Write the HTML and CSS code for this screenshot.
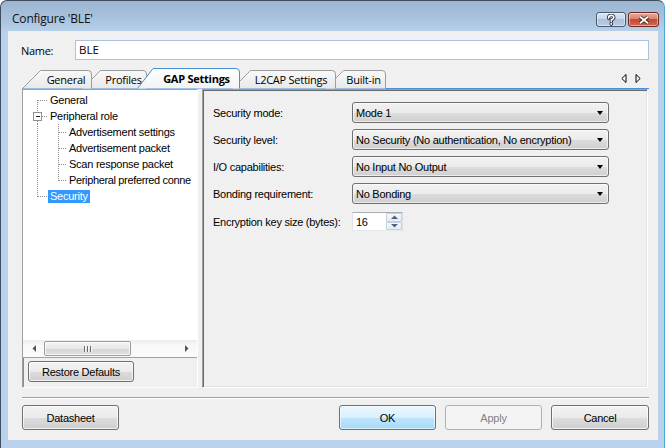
FILE: index.html
```html
<!DOCTYPE html>
<html>
<head>
<meta charset="utf-8">
<title>Configure 'BLE'</title>
<link rel="stylesheet" href="styles.css">
</head>
<body>
<div class="win">
  <div class="titlebar">
    <span class="title">Configure 'BLE'</span>
    <div class="caption">
      <div class="cbtn help">
        <svg width="12" height="12" viewBox="0 0 12 12"><path class="glyph-o" d="M3.6 4 Q3.6 1.4 6.2 1.4 Q8.8 1.4 8.8 3.6 Q8.8 5.1 6.3 5.9 V7.3 M6.3 9.2 V10.2"/><path class="glyph-i" d="M3.6 4 Q3.6 1.4 6.2 1.4 Q8.8 1.4 8.8 3.6 Q8.8 5.1 6.3 5.9 V7.3 M6.3 9.2 V10.2"/></svg>
      </div>
      <div class="cbtn close">
        <svg width="14" height="10" viewBox="0 0 14 10"><path class="glyph-o" d="M3 1.8 L11 8.2 M11 1.8 L3 8.2"/><path class="glyph-i" d="M3 1.8 L11 8.2 M11 1.8 L3 8.2"/></svg>
      </div>
    </div>
  </div>

  <div class="client">
    <div class="name-row">
      <span class="name-label">Name:</span>
      <div class="textbox">BLE</div>
    </div>

    <div class="tabstrip">
      <div class="tab t-general">
        <svg class="tabshape" width="70" height="20"><defs><linearGradient id="gu" x1="0" y1="0" x2="0" y2="1"><stop offset="0" stop-color="#f9f9f9"/><stop offset="1" stop-color="#e8e8e8"/></linearGradient><linearGradient id="gs" x1="0" y1="0" x2="0" y2="1"><stop offset="0" stop-color="#ffffff"/><stop offset="1" stop-color="#f3f3f3"/></linearGradient></defs><path d="M0.5 20.5 L18.5 2.5 H66 Q69.5 2.5 69.5 6 V20.5" fill="url(#gu)" stroke="#9c9c9c"/></svg>
        <span class="tabtext">General</span>
      </div>
      <div class="tab t-profiles">
        <svg class="tabshape" width="65" height="20"><path d="M0.5 20.5 L18.5 2.5 H61 Q64.5 2.5 64.5 6 V20.5" fill="url(#gu)" stroke="#9c9c9c"/></svg>
        <span class="tabtext">Profiles</span>
      </div>
      <div class="tab t-gap sel">
        <svg class="tabshape" width="103" height="20"><path d="M0.5 20.5 L16 0.5 H99 Q102.5 0.5 102.5 4 V20.5" fill="url(#gs)" stroke="#4a90d9"/></svg>
        <span class="tabtext">GAP Settings</span>
      </div>
      <div class="tab t-l2cap">
        <svg class="tabshape" width="104" height="20"><path d="M0.5 20.5 L18.5 2.5 H100 Q103.5 2.5 103.5 6 V20.5" fill="url(#gu)" stroke="#9c9c9c"/></svg>
        <span class="tabtext">L2CAP Settings</span>
      </div>
      <div class="tab t-builtin">
        <svg class="tabshape" width="61" height="20"><path d="M0.5 20.5 L18.5 2.5 H57 Q60.5 2.5 60.5 6 V20.5" fill="url(#gu)" stroke="#9c9c9c"/></svg>
        <span class="tabtext">Built-in</span>
      </div>
      <div class="tabnav">
        <svg width="6" height="9" viewBox="0 0 6 9"><path d="M5 0.5 V8.5 L0.8 4.5 Z" fill="#fff" stroke="#000"/></svg>
        <svg width="6" height="9" viewBox="0 0 6 9"><path d="M1 0.5 V8.5 L5.2 4.5 Z" fill="#fff" stroke="#000"/></svg>
      </div>
    </div>

    <div class="tabpage">
      <div class="leftpane">
        <div class="tree">
          <div class="rows">
            <div class="node">
              <svg class="guide" width="25" height="16"><path d="M14.5 8 V16 M14.5 8.5 H25"/></svg>
              <span class="label">General</span>
            </div>
            <div class="node">
              <svg class="guide" width="25" height="16"><path d="M14.5 0 V4 M14.5 13 V16 M19 8.5 H25"/><rect class="box" x="10.5" y="4.5" width="8" height="8"/><path class="minus" d="M12.5 8.5 H16.5"/></svg>
              <span class="label">Peripheral role</span>
            </div>
            <div class="node">
              <svg class="guide" width="44" height="16"><path d="M14.5 0 V16 M35.5 0 V16 M35.5 8.5 H44"/></svg>
              <span class="label">Advertisement settings</span>
            </div>
            <div class="node">
              <svg class="guide" width="44" height="16"><path d="M14.5 0 V16 M35.5 0 V16 M35.5 8.5 H44"/></svg>
              <span class="label">Advertisement packet</span>
            </div>
            <div class="node">
              <svg class="guide" width="44" height="16"><path d="M14.5 0 V16 M35.5 0 V16 M35.5 8.5 H44"/></svg>
              <span class="label">Scan response packet</span>
            </div>
            <div class="node">
              <svg class="guide" width="44" height="16"><path d="M14.5 0 V16 M35.5 0 V8.5 M35.5 8.5 H44"/></svg>
              <span class="label tight">Peripheral preferred conne</span>
            </div>
            <div class="node">
              <svg class="guide" width="25" height="16"><path d="M14.5 0 V8.5 M14.5 8.5 H25"/></svg>
              <span class="label selected">Security</span>
            </div>
          </div>
          <div class="hscroll">
            <div class="sbtn"><svg width="4" height="7" viewBox="0 0 4 7"><path d="M4 0 V7 L0.5 3.5 Z" fill="#555"/></svg></div>
            <div class="thumb"><span class="grip"></span><span class="grip"></span><span class="grip"></span></div>
            <div class="track"></div>
            <div class="sbtn"><svg width="4" height="7" viewBox="0 0 4 7"><path d="M0 0 V7 L3.5 3.5 Z" fill="#555"/></svg></div>
          </div>
        </div>
        <div class="restore-row">
          <div class="btn restore">Restore Defaults</div>
        </div>
      </div>

      <div class="rightpane">
        <div class="frow">
          <span class="flabel">Security mode:</span>
          <div class="combo"><span class="ctext">Mode 1</span><span class="carrow"></span></div>
        </div>
        <div class="frow">
          <span class="flabel">Security level:</span>
          <div class="combo"><span class="ctext">No Security (No authentication, No encryption)</span><span class="carrow"></span></div>
        </div>
        <div class="frow">
          <span class="flabel">I/O capabilities:</span>
          <div class="combo"><span class="ctext">No Input No Output</span><span class="carrow"></span></div>
        </div>
        <div class="frow">
          <span class="flabel">Bonding requirement:</span>
          <div class="combo"><span class="ctext">No Bonding</span><span class="carrow"></span></div>
        </div>
        <div class="frow nrow">
          <span class="flabel">Encryption key size (bytes):</span>
          <div class="numeric">
            <span class="ntext">16</span>
            <div class="spin">
              <div class="sp up"><svg width="7" height="4" viewBox="0 0 7 4"><path d="M0 4 H7 L3.5 0.5 Z" fill="#4d6185"/></svg></div>
              <div class="sp down"><svg width="7" height="4" viewBox="0 0 7 4"><path d="M0 0 H7 L3.5 3.5 Z" fill="#4d6185"/></svg></div>
            </div>
          </div>
        </div>
      </div>
    </div>

    <div class="separator"></div>

    <div class="buttons">
      <div class="btn w97">Datasheet</div>
      <div class="spacer"></div>
      <div class="btn w97 default">OK</div>
      <div class="btn w97 disabled">Apply</div>
      <div class="btn w98">Cancel</div>
    </div>
  </div>
</div>
</body>
</html>
```

FILE: styles.css
```css
* { box-sizing: border-box; }
html, body { margin: 0; padding: 0; background: #ffffff; }
body {
  width: 666px; height: 448px; overflow: hidden;
  font-family: "Liberation Sans", Arial, sans-serif;
  font-size: 11px; letter-spacing: -0.25px; color: #000;
}

.win {
  width: 665px; height: 448px;
  border: 1px solid #3e4d60; border-bottom: none; border-right-color: #4aa7d6;
  border-radius: 7px 7px 0 0;
  background: linear-gradient(to bottom, #9cb6d2 0, #a9c3df 18px, #b9d1ea 31px, #b9d1ea 100%);
  padding: 0 6px 0 7px;
  display: flex; flex-direction: column;
}

.titlebar { height: 30px; display: flex; align-items: flex-start; flex: none; }
.title {
  font-family: "Open Sans", "Noto Sans", sans-serif; font-size: 12px; letter-spacing: -0.2px;
  line-height: 16px; margin-top: 10px; margin-left: 4px; flex: 1; color: #111;
}
.caption { display: flex; gap: 2px; margin-top: 11px; margin-right: -1px; }
.cbtn {
  height: 15px; border: 1px solid #4b5a6d; border-radius: 3px;
  display: flex; align-items: center; justify-content: center;
  box-shadow: inset 0 0 0 1px rgba(255,255,255,0.45);
}
.help { width: 30px; background: linear-gradient(to bottom, #dce7f4 0, #c5d6eb 45%, #aac1dd 50%, #b8cde6 100%); }
.close { width: 31px; border-color: #6a2b22; background: linear-gradient(to bottom, #e8a99b 0, #d88572 45%, #c44b35 50%, #d2664e 100%); }
.glyph-o { fill: none; stroke: #2f3440; stroke-width: 3.4; stroke-linecap: round; }
.glyph-i { fill: none; stroke: #ffffff; stroke-width: 1.6; stroke-linecap: round; }
.close .glyph-o { stroke: #3d1a16; stroke-linecap: butt; stroke-width: 3.6; }
.close .glyph-i { stroke-linecap: butt; stroke-width: 1.8; }

.client {
  flex: none; height: 409px; background: #f0f0f0;
  padding: 9px 9px 0 14px;
  display: flex; flex-direction: column;
}

.name-row { display: flex; align-items: center; height: 20px; }
.name-label {
  width: 54px; margin-left: -1px;
  font-family: "Open Sans", "Noto Sans", sans-serif; font-size: 11px; letter-spacing: -0.3px;
}
.textbox {
  flex: 1; height: 20px; background: #fff; border: 1px solid #a9c2dd;
  padding-left: 3px; line-height: 18px;
  font-family: "Open Sans", "Noto Sans", sans-serif; font-size: 11.5px; letter-spacing: 0;
}

.tabstrip {
  margin-top: 8px; height: 21px; flex: none;
  border-bottom: 1px solid #4a90d9;
  display: flex; align-items: flex-start;
}
.tab {
  position: relative; height: 20px; flex: none;
  display: flex; align-items: center; justify-content: center;
  padding-left: 18px; padding-top: 3px;
  font-family: "Open Sans", "Noto Sans", sans-serif; font-size: 11px; letter-spacing: -0.25px;
  color: #000;
}
.tabshape { position: absolute; left: 0; top: 0; z-index: -1; overflow: visible; }
.tabtext { position: relative; white-space: nowrap; }
.t-general { width: 70px; z-index: 5; }
.t-profiles { width: 65px; margin-left: -10px; z-index: 4; }
.t-gap { width: 103px; margin-left: -10px; z-index: 10; padding-left: 16px; padding-top: 1px; font-weight: 700; }
.t-l2cap { width: 104px; margin-left: -8px; z-index: 3; padding-left: 14px; }
.t-builtin { width: 61px; margin-left: -11px; z-index: 2; padding-left: 16px; }
.tabnav { margin-left: auto; margin-right: 8px; margin-top: 6px; display: flex; gap: 8px; }

.tabpage { display: flex; gap: 4px; height: 299px; flex: none; }

.leftpane {
  width: 176px; height: 299px;
  border: 1px solid; border-color: #a0a0a0 #ffffff #ffffff #a0a0a0;
  box-shadow: inset 1px 1px 0 #8a8a8a;
  display: flex; flex-direction: column;
}
.tree {
  height: 268px; background: #fff; border-bottom: 1px solid #a0a0a0;
  display: flex; flex-direction: column; overflow: hidden;
}
.rows { flex: 1; padding-top: 2px; overflow: hidden; }
.node { display: flex; align-items: center; height: 16px; white-space: nowrap; }
.guide { flex: none; }
.guide path { fill: none; stroke: #8c8c8c; stroke-dasharray: 1 1; shape-rendering: crispEdges; }
.guide .box { fill: #fff; stroke: #919191; shape-rendering: crispEdges; }
.guide .minus { stroke: #202020; stroke-dasharray: none; }
.label { padding: 0 2px; line-height: 13px; height: 13px; }
.label.tight { letter-spacing: -0.35px; }
.label.selected { background: #3399ff; color: #fff; }

.hscroll {
  height: 17px; flex: none; display: flex; align-items: stretch;
  background: linear-gradient(to bottom, #ececec 0, #f8f8f8 30%, #fbfbfb 100%);
  padding: 1px 0;
}
.sbtn { width: 21px; flex: none; display: flex; align-items: center; justify-content: center; }
.thumb {
  width: 87px; flex: none; border: 1px solid #9b9b9b; border-radius: 2px;
  background: linear-gradient(to bottom, #f3f3f3 0, #e8e8e8 50%, #d6d6d6 51%, #e0e0e0 100%);
  box-shadow: inset 0 0 0 1px rgba(255,255,255,0.7);
  display: flex; align-items: center; justify-content: center; gap: 1px;
}
.grip { width: 1px; height: 6px; background: #6c6c6c; box-shadow: 1px 0 0 #f8f8f8; margin-right: 1px; }
.track { flex: 1; }

.restore-row { padding: 3px 0 0 5px; }

.rightpane {
  width: 446px; height: 299px;
  border: 1px solid; border-color: #a0a0a0 #ffffff #ffffff #a0a0a0;
  box-shadow: inset 1px 1px 0 #696969, inset -1px -1px 0 #e3e3e3;
  padding: 12px 0 0 10px;
  display: flex; flex-direction: column; gap: 6px;
}
.frow { display: flex; align-items: center; height: 21px; }
.flabel { width: 139px; flex: none; white-space: nowrap; }
.combo {
  width: 257px; height: 21px; border: 1px solid #707070; border-radius: 3px;
  background: linear-gradient(to bottom, #f2f2f2 0, #ebebeb 50%, #dddddd 51%, #cfcfcf 100%);
  box-shadow: inset 0 0 0 1px rgba(255,255,255,0.6);
  display: flex; align-items: center; padding-left: 3px; padding-right: 5px;
}
.ctext { flex: 1; white-space: nowrap; overflow: hidden; }
.carrow {
  width: 0; height: 0; border-left: 3.5px solid transparent; border-right: 3.5px solid transparent;
  border-top: 4px solid #000; flex: none;
}
.nrow { height: 19px; margin-top: 2px; }
.numeric {
  width: 51px; height: 19px; background: #fff;
  border: 1px solid; border-color: #abadb3 #dbdfe6 #e3e9ef #e2e3ea;
  display: flex; align-items: center; padding-left: 3px;
}
.ntext { flex: 1; }
.spin { width: 16px; height: 17px; display: flex; flex-direction: column; }
.sp {
  flex: 1; display: flex; align-items: center; justify-content: center;
  border: 1px solid #c6d0dc; border-radius: 1px;
  background: linear-gradient(to bottom, #f6f9fc, #e4ebf3);
}

.separator { margin-top: 9px; height: 2px; border-top: 1px solid #a0a0a0; border-bottom: 1px solid #ffffff; flex: none; }

.buttons { display: flex; margin-top: 6px; gap: 9px; }
.spacer { flex: 1; }
.btn {
  height: 25px; border: 1px solid #707070; border-radius: 3px;
  background: linear-gradient(to bottom, #f2f2f2 0, #ebebeb 50%, #dddddd 51%, #cfcfcf 100%);
  box-shadow: inset 0 0 0 1px rgba(255,255,255,0.7);
  display: flex; align-items: center; justify-content: center; white-space: nowrap;
}
.btn.restore { width: 106px; height: 21px; }
.w97 { width: 97px; }
.w98 { width: 98px; }
.btn.default {
  border-color: #3c7fb1;
  background: linear-gradient(to bottom, #eaf6fd 0, #d9f0fc 50%, #bee6fd 51%, #a7d9f5 100%);
  box-shadow: inset 0 0 0 1px rgba(255,255,255,0.6);
}
.btn.disabled {
  border-color: #adb2b5; background: #f4f4f4; color: #838383; box-shadow: none;
}
```
